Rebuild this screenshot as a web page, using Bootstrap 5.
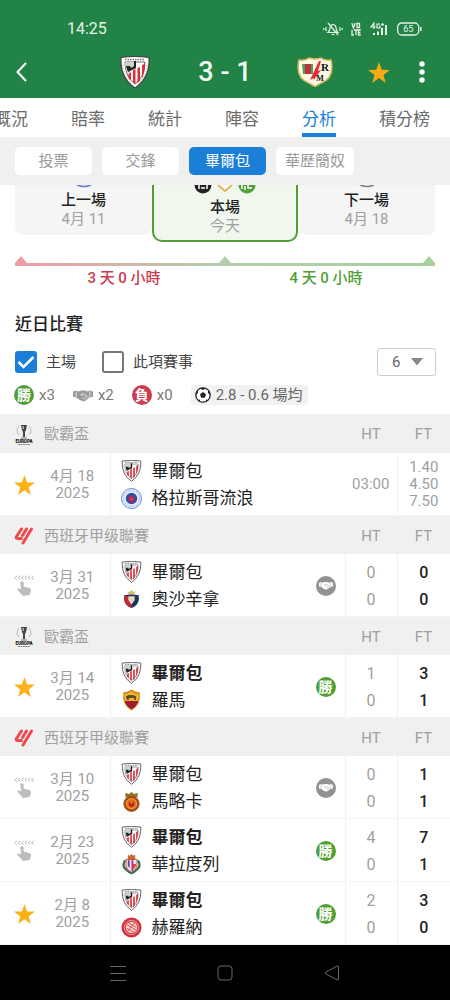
<!DOCTYPE html>
<html lang="zh-Hant">
<head>
<meta charset="utf-8">
<meta name="viewport" content="width=device-width, initial-scale=1">
<title>畢爾包 3 - 1 華歷簡奴</title>
<link rel="stylesheet" href="https://cdn.jsdelivr.net/npm/bootstrap@5.3.0/dist/css/bootstrap.min.css">
<style>
  :root { --green: #228346; --win: #4f9f36; --lose: #cb3c4f; --blue: #1b7fd8; --soft: #f0f0f0; --dim: #a0a0a0; }
  body { font-family: Roboto, "Noto Sans CJK TC", sans-serif; font-size: 15px; line-height: 20px; color: #222; background: #fff; }
  svg { display: block; flex: none; }
  .app-head { background: var(--green); color: #fff; }
  .status-row { height: 46px; padding: 12px 28px 0 67px; font-size: 16px; color: #e6f3e9; }
  .title-row { display: grid; grid-template-columns: 90px 1fr 1fr 1fr 90px; height: 52px; align-items: center; justify-items: center; }
  .bare { background: none; border: 0; padding: 0; color: inherit; }
  .score-line { font-size: 27px; line-height: 32px; font-weight: 500; color: #f3faf4; margin: 0; }
  .tab-strip { gap: 43px; height: 39px; margin-left: -6px; overflow: hidden; }
  .tab-strip a { color: #6b6b6b; font-size: 17px; line-height: 24px; padding: 9px 0 2px; border-bottom: 4px solid transparent; text-decoration: none; white-space: nowrap; }
  .tab-strip a.active { color: var(--blue); border-color: var(--blue); }
  .pill-bar { background: var(--soft); padding: 10px 15px; gap: 10px; height: 48px; }
  .pill { border: 0; border-radius: 5px; background: #fff; color: #9a9a9a; min-width: 77px; height: 28px; line-height: 28px; padding: 0 9px; }
  .pill.active { background: var(--blue); color: #fff; }
  .trio { padding: 0 15px; height: 57px; overflow: hidden; text-align: center; }
  .side-card { flex: 1; height: 50px; background: #f5f5f5; padding-top: 5px; border-radius: 0 0 8px 8px; }
  .mid-card { width: 146px; background: #f0f8ee; border: solid var(--win); border-width: 0 2px 2px; border-radius: 0 0 10px 10px; }
  .mid-card .title-text { margin-top: 3px; }
  .title-text { font-weight: 500; color: #222; line-height: 20px; }
  .day-text { color: var(--dim); line-height: 19px; }
  .rail { margin: 14px 15px 0; }
  .rail-line { height: 3px; background: linear-gradient(90deg, #ef9aa6, #b3cfaa 50%, #a9d09a); }
  .rail-label { font-weight: 500; line-height: 20px; margin-top: 2px; }
  h2 { font-size: 17px; line-height: 24px; font-weight: 500; margin: 24px 15px 0; }
  .filters { padding: 11px 14px 0 15px; height: 41px; }
  .filters .form-check-input { width: 22px; height: 22px; margin: 0 9px 0 0; border: 2px solid #777; border-radius: 3px; }
  .filters .form-check-input:checked { background-color: var(--blue); border-color: var(--blue); background-image: url("data:image/svg+xml,%3Csvg xmlns='http://www.w3.org/2000/svg' viewBox='0 0 18 18'%3E%3Cpath d='M1.500 9l5 5L16.500 4' fill='none' stroke='%23fff' stroke-width='2.500'/%3E%3C/svg%3E"); }
  .filters label { margin-right: 26px; color: #444; }
  .count-select { width: 59px; height: 28px; padding: 0 0 0 14px; border: 1px solid #ccc; border-radius: 3px; color: #666; appearance: none; background: #fff url("data:image/svg+xml,%3Csvg xmlns='http://www.w3.org/2000/svg' width='12' height='8'%3E%3Cpath d='M0 0h12L6 7.500z' fill='%23888'/%3E%3C/svg%3E") no-repeat right 12px center; }
  .legend-row { padding: 8px 14px 9px; gap: 18px; color: #777; height: 37px; }
  .legend-row > span { gap: 5px; }
  .mark-dot { width: 20px; height: 20px; border-radius: 50%; color: #fff; background: var(--win); font-size: 14px; line-height: 20px; font-weight: 700; text-align: center; flex: none; }
  .mark-dot.lose { background: var(--lose); }
  .mark-dot.draw { background: #929292; display: flex; align-items: center; justify-content: center; }
  .avg-chip { background: #f2f2f2; padding: 0 5px 0 4px; border-radius: 3px; color: #666; }
  .games { table-layout: fixed; margin: 0; }
  .games > tbody > tr > * { padding: 2px 0 0; border: 0; vertical-align: middle; text-align: center; font-weight: 400; color: var(--dim); height: 63px; border-bottom: 1px solid #f5f5f5; line-height: 17px; }
  .games > tbody > tr.league > * { height: 38px; padding-top: 4px; background: var(--soft); border-color: var(--soft); }
  .league-name { gap: 10px; padding-left: 14px; height: 22px; }
  .league-name svg { width: 20px; }
  .games > tbody > tr.game > .when { padding-right: 13px; }
  .games > tbody > tr.game > .split { border-left: 1px solid #f0f0f0; }
  .games > tbody > tr.game > .pts { line-height: 27px; font-size: 16px; }
  .games > tbody > tr.game > .full { color: #222; font-weight: 500; }
  .games td > svg { margin: auto; }
  .clubs { padding-left: 10px; padding-right: 9px; }
  .club { height: 27px; gap: 10px; font-size: 17px; color: #222; }
  .club.won { font-weight: 700; }
  .sys-nav { background: #000; height: 55px; gap: 89px; color: #686868; }
</style>
</head>
<body>
<svg class="d-none" aria-hidden="true">
  <symbol id="athletic" viewBox="0 0 30 33">
    <path d="M1 1.500Q15-.5 29 1.500Q30 22 15 32Q0 22 1 1.500z" fill="#fff" stroke="#444" stroke-width="1.200"/>
    <path d="M5 6H25Q25 21 15 28Q5 21 5 6z" fill="#fff" stroke="#444" stroke-width=".8"/>
    <path d="M5 6H16V11L12 14L8 17.500Q5 12 5 6z" fill="#cdd3c4"/>
    <path d="M6 10h4l1 2 5-3v3l-8 4zM14 5h2v5h-2z" fill="#222"/>
    <path d="M8.500 18l2.500-2v8.500l-2.500-2.500zM13 14.500l2.500-2V28L13 26zM17.500 12l2.500-1v14l-2.500 2zM22 9.500L25 7q0 9-3 15.500z" fill="#d8303c"/>
    <path d="M5 3.500h20" stroke="#777" stroke-width="1.500" stroke-dasharray="1.500 1"/>
    <path d="M3 9q1 12 9 19M27 9q-1 12-9 19" fill="none" stroke="#999" stroke-dasharray="1 2"/>
  </symbol>
  <symbol id="rangers" viewBox="0 0 22 22">
    <circle cx="11" cy="11" r="10.500" fill="#eaf0fb" stroke="#5c83cf"/>
    <circle cx="11" cy="11" r="8.300" fill="none" stroke="#7f9edb" stroke-dasharray="1.200 1"/>
    <circle cx="11" cy="11" r="6" fill="#2450b0"/><path d="M8 7l3 2 3-2v7l-3 2-3-2z" fill="#a52b5c"/><path d="M9 10h4v3H9z" fill="#dd3146"/>
  </symbol>
  <symbol id="osasuna" viewBox="0 0 22 22">
    <path d="M6.500 2l2 1.500L11 1l2.500 2.500 2-1.500-1 4h-7z" fill="#d8bb72"/>
    <path d="M3 7q8-2 16 0v5q-1 6-8 9-7-3-8-9z" fill="#1b3665"/><path d="M3 7l8 2v12q-7-3-8-9z" fill="#c3283a"/>
    <path d="M7.500 8h7v4l-3.500 5-3.500-5z" fill="#e7d8bd"/>
  </symbol>
  <symbol id="roma" viewBox="0 0 22 24">
    <path d="M2.500 4Q7 4 11 1q4 3 8.500 3 2 13-8.500 19Q.5 17 2.500 4z" fill="#9e1b32" stroke="#d9a520"/>
    <path d="M3 5q4 0 8-3 4 3 8 3 .5 4-.5 8h-15Q2.500 9 3 5z" fill="#f0b323"/>
    <path d="M5 8q5-3 11 0v4h-2V9.500L8 10v2H6z" fill="#554a3d"/>
  </symbol>
  <symbol id="mallorca" viewBox="0 0 22 24">
    <path d="M4 2l4 1.500L11 1l3 2.500L18 2v5H4z" fill="#8b7a25"/><circle cx="11" cy="14.500" r="8.800" fill="#b53b1e" stroke="#8b6a1d"/>
    <circle cx="11" cy="14.500" r="6" fill="#e2731d" stroke="#eeb341"/><path d="M8 11.500v5l3 2 3-2v-5l-3 4z" fill="#b51e26"/>
  </symbol>
  <symbol id="valladolid" viewBox="0 0 22 24">
    <path d="M4 8q-4 6 1 10 3 3 6 4 3-1 6-4 5-4 1-10" fill="none" stroke="#426b59" stroke-width="2.500"/>
    <path d="M7 2l2 1 2-2 2 2 2-1v5H7z" fill="#ca6a27"/>
    <path d="M5 7h12v7q-1 5-6 7-5-2-6-7z" fill="#f4e6f0" stroke="#b8452d"/><path d="M7 8h2v9l-2-3zM11 8h2v11l-2 1z" fill="#7a3c91"/><path d="M12 12h4q0 4-4 6z" fill="#de403c"/>
  </symbol>
  <symbol id="girona" viewBox="0 0 22 22">
    <circle cx="11" cy="11" r="10.500" fill="#d32f3e"/><circle cx="11" cy="11" r="7.500" fill="none" stroke="#f3c0bb" stroke-width=".8"/><circle cx="11" cy="11" r="6" fill="#f6d1c7"/>
    <path d="M6 8l10 6M6 12l8 4M8 6l8 5M14 6l-7 9" stroke="#d9525a" stroke-width="1"/>
  </symbol>
  <symbol id="star" viewBox="0 0 22 21"><path d="M11 0l2.700 7.800 8.300.2-6.600 5 2.400 8L11 16.100 4.200 21l2.400-8L0 8l8.300-.2z" fill="currentColor"/></symbol>
  <symbol id="swipe" viewBox="0 0 22 22">
    <path d="M3 .8L1 2.800l2 2M6.500 .8L4.500 2.800l2 2M10 .8L8 2.800l2 2M13.500 .8L11.500 2.800l2 2M17 .8L15 2.800l2 2M20.500 .8L18.500 2.800l2 2" fill="none" stroke="#aaa"/>
    <path d="M6.500 7.500q1.800-2 3.600 0v4.500l6.500 1.800q1.600.6 1.200 2.500L16.500 21l-7 1-6-6.500 1-1.500 3 1z" fill="#bdbdbd"/>
  </symbol>
  <symbol id="europa" viewBox="0 0 18 22">
    <path d="M4 2q-4 5 0 9M14 2q4 5 0 9" fill="none" stroke="#bbb"/>
    <path d="M6 1h6l-1 5-1 2v5H8V8L7 6z" fill="#444"/><path d="M8.200 2v3" stroke="#ddd"/>
    <path d="M6 14h6" stroke="#777"/><text x="9" y="18.500" text-anchor="middle" font-size="4.500" font-weight="900" fill="#111">EUROPA</text>
    <path d="M3 20.500h12" stroke="#888" stroke-dasharray="2 .5"/>
  </symbol>
  <symbol id="laliga" viewBox="0 0 20 18">
    <path d="M7.500 2L2.500 9.500Q1.500 11.500 4 11.500H7.500M12.500 2L8.500 8.500M17.500 2L9 16" fill="none" stroke="#ee4b4e" stroke-width="3" stroke-linecap="round" stroke-linejoin="round"/>
  </symbol>
  <symbol id="shake" viewBox="0 0 22 13">
    <path d="M0 2l4-1 2 1 3-1h4l3 1 2-1 4 1v6l-3 .5-6 4q-1.500.8-2.500-.3-1.500.5-2.500-.7-1.300 0-2-1.200L3 8.500 0 8z" fill="currentColor"/>
    <path d="M11 3.500L8.500 6q1.500 1 4-1l5 4M12.500 8l2.500 2M10.500 9l2 2M3.500 2v6M18.500 2v6" fill="none" stroke="var(--cut,#fff)" stroke-width=".8"/>
  </symbol>
</svg>

<div class="d-flex flex-column min-vh-100">
<header class="app-head">
  <div class="status-row d-flex align-items-center justify-content-between">
    <span>14:25</span>
    <span class="d-flex align-items-center gap-2">
      <svg width="20" height="14" viewBox="0 0 20 14" fill="none" stroke="currentColor" stroke-width="1.200"><path d="M5 10.500h10q-2-1.500-2-5Q12.500 2.500 10 2.500T7 5.500q0 3.500-2 5zM8.500 12.500h3M5 1l10 12M3 5v4M17 5v4M.800 6v2M19.200 6v2"/></svg>
      <svg width="10" height="14" viewBox="0 0 10 14" fill="none" stroke="currentColor" stroke-width="1.300"><path d="M.8 1L2.500 6 4.200 1M6 1.500h2.500V5.500H6zM1 8v5h2M3 8h4M5 8v5M9.800 8H7.500v5h2.300M7.500 10.500h2"/></svg>
      <svg width="20" height="14" viewBox="0 0 20 14" fill="none" stroke="currentColor" stroke-width="1.200"><path d="M5 7V1L2 5h4.500M11 2H8v4h3V4H9.800M12 2.500h3M13.500 1v3"/><path d="M5 13v-2M9 13V9.500M13 13V6M17 13V3" stroke-width="2"/></svg>
      <svg width="25" height="14" viewBox="0 0 25 14"><rect x=".7" y="1" width="21" height="12" rx="4" fill="none" stroke="currentColor" stroke-width="1.300"/><path d="M23.800 5v4" stroke="currentColor" stroke-width="1.500"/><text x="11.200" y="10.300" text-anchor="middle" font-size="9" fill="currentColor">65</text></svg>
    </span>
  </div>
  <div class="title-row">
    <button class="bare w-100 ps-3 text-start" aria-label="返回"><svg width="11" height="20" viewBox="0 0 11 20" fill="none" stroke="currentColor" stroke-width="2"><path d="M10 1L1.500 10 10 19"/></svg></button>
    <svg width="30" height="33"><use href="#athletic"/></svg>
    <h1 class="score-line">3 - 1</h1>
    <svg width="36" height="30" viewBox="0 0 36 30">
      <path d="M2 3Q9 4 12 1q6 2 12 0 3 3 10 2 4 18-10 23l-6 3.500-6-3.500Q-2 21 2 3z" fill="#fff8e6" stroke="#d9bd62" stroke-width="1.500"/>
      <path d="M5 7h11v10H6z" fill="#5a9b58"/><path d="M8 7h6v10H8z" fill="#b8343a"/>
      <path d="M22 4L13 23l4-2-1 3 8-11-3 1 3-10z" fill="#e32b3b"/>
      <text x="28" y="14" text-anchor="middle" font-family="Liberation Serif, serif" font-weight="700" font-size="11" fill="#111">R</text>
      <text x="23" y="24" text-anchor="middle" font-family="Liberation Serif, serif" font-weight="700" font-size="8" fill="#111">M</text>
    </svg>
    <div class="d-flex w-100">
      <button class="bare ps-2" aria-label="收藏" style="color:#f9ab11"><svg width="22" height="21"><use href="#star"/></svg></button>
      <button class="bare ms-4 ps-1" aria-label="更多"><svg width="8" height="22" viewBox="0 0 8 22" fill="currentColor"><circle cx="4" cy="3" r="2.700"/><circle cx="4" cy="11" r="2.700"/><circle cx="4" cy="19" r="2.700"/></svg></button>
    </div>
  </div>
</header>

<nav class="tab-strip d-flex">
  <a href="#">概況</a><a href="#">賠率</a><a href="#">統計</a><a href="#">陣容</a><a href="#" class="active">分析</a><a href="#">積分榜</a>
</nav>
<div class="pill-bar d-flex">
  <button class="pill">投票</button><button class="pill">交鋒</button><button class="pill active">畢爾包</button><button class="pill">華歷簡奴</button>
</div>

<main class="flex-grow-1">
  <section class="trio d-flex">
    <div class="side-card position-relative">
      <svg class="position-absolute top-0 start-50 translate-middle-x" width="16" height="3" viewBox="0 0 16 3"><path d="M1 0q7 3 14 0" fill="none" stroke="#6878c8" stroke-width="1.500"/></svg>
      <div class="title-text">上一場</div><div class="day-text">4月 11</div>
    </div>
    <div class="mid-card">
      <svg class="mx-auto" width="62" height="9" viewBox="0 0 62 9"><circle cx="9" cy="0" r="8.500" fill="#222"/><path d="M5 4V0M13 4V0M7 3h4" stroke="#fff" stroke-width="1.500"/><path d="M24 0l7 6 7-6" fill="#fff" stroke="#dfb354" stroke-width="2"/><circle cx="53" cy="0" r="8.500" fill="#4f9f36"/><path d="M48 0v4M51 1v4M54 0v3h4" stroke="#fff" stroke-width="1.500" fill="none"/></svg>
      <div class="title-text">本場</div><div class="day-text">今天</div>
    </div>
    <div class="side-card position-relative">
      <svg class="position-absolute top-0 start-50 translate-middle-x" width="16" height="3" viewBox="0 0 16 3"><path d="M1 0q7 3 14 0" fill="none" stroke="#7c8090" stroke-width="1.500"/></svg>
      <div class="title-text">下一場</div><div class="day-text">4月 18</div>
    </div>
  </section>

  <section class="rail">
    <div class="d-flex justify-content-between">
      <svg width="12" height="7" viewBox="0 0 12 7"><path d="M6 0l6 7H0z" fill="#ef9aa6"/></svg>
      <svg width="12" height="7" viewBox="0 0 12 7"><path d="M6 0l6 7H0z" fill="#b3cfaa"/></svg>
      <svg width="12" height="7" viewBox="0 0 12 7"><path d="M6 0l6 7H0z" fill="#a9d09a"/></svg>
    </div>
    <div class="rail-line"></div>
    <div class="rail-label d-flex text-center px-2">
      <span class="w-50" style="color:var(--lose)">3 天 0 小時</span>
      <span class="w-50" style="color:var(--win)">4 天 0 小時</span>
    </div>
  </section>

  <h2>近日比賽</h2>
  <form class="filters d-flex align-items-center">
    <input class="form-check-input" type="checkbox" id="home" checked><label for="home">主場</label>
    <input class="form-check-input" type="checkbox" id="same"><label for="same">此項賽事</label>
    <select class="count-select ms-auto" aria-label="場數"><option>6</option><option>10</option></select>
  </form>
  <div class="legend-row d-flex">
    <span class="d-flex"><span class="mark-dot">勝</span>x3</span>
    <span class="d-flex align-items-center"><svg width="20" height="13" style="color:#999"><use href="#shake"/></svg>x2</span>
    <span class="d-flex"><span class="mark-dot lose">負</span>x0</span>
    <span class="avg-chip d-flex align-items-center"><svg width="16" height="16" viewBox="0 0 16 16"><circle cx="8" cy="8" r="7.200" fill="#fff" stroke="#222" stroke-width="1.300"/><path d="M8 5l3 2.200-1.100 3.600H6.100L5 7.200zM5 1.500L8 3l3-1.500L8 .8zM1 8l2-2-.5-3L1 6zM15 8l-2-2 .5-3L15 6zM3 13l2-.5L5 15zM13 13l-2-.5V15z" fill="#222"/></svg>2.8 - 0.6 場均</span>
  </div>

  <table class="table games">
    <colgroup><col style="width:48px"><col style="width:62px"><col><col style="width:52px"><col style="width:53px"></colgroup>
    <tbody>
      <tr class="league"><th colspan="3"><div class="league-name d-flex align-items-center"><svg height="22"><use href="#europa"/></svg>歐霸盃</div></th><th>HT</th><th>FT</th></tr>
      <tr class="game"><td style="color:#fbb117"><svg width="21" height="20"><use href="#star"/></svg></td><td class="when">4月 18<br>2025</td>
        <td class="split"><div class="clubs"><div class="club d-flex align-items-center"><svg width="21" height="22"><use href="#athletic"/></svg>畢爾包</div><div class="club d-flex align-items-center"><svg width="21" height="21"><use href="#rangers"/></svg>格拉斯哥流浪</div></div></td>
        <td>03:00</td><td class="split">1.40<br>4.50<br>7.50</td></tr>

      <tr class="league"><th colspan="3"><div class="league-name d-flex align-items-center"><svg height="18"><use href="#laliga"/></svg>西班牙甲级聯賽</div></th><th>HT</th><th>FT</th></tr>
      <tr class="game"><td><svg width="21" height="21"><use href="#swipe"/></svg></td><td class="when">3月 31<br>2025</td>
        <td class="split"><div class="clubs d-flex align-items-center justify-content-between"><div><div class="club d-flex align-items-center"><svg width="21" height="22"><use href="#athletic"/></svg>畢爾包</div><div class="club d-flex align-items-center"><svg width="21" height="20"><use href="#osasuna"/></svg>奧沙辛拿</div></div><span class="mark-dot draw" style="--cut:#929292"><svg width="14" height="9"><use href="#shake"/></svg></span></div></td>
        <td class="split pts">0<br>0</td><td class="split pts full">0<br>0</td></tr>

      <tr class="league"><th colspan="3"><div class="league-name d-flex align-items-center"><svg height="22"><use href="#europa"/></svg>歐霸盃</div></th><th>HT</th><th>FT</th></tr>
      <tr class="game"><td style="color:#fbb117"><svg width="21" height="20"><use href="#star"/></svg></td><td class="when">3月 14<br>2025</td>
        <td class="split"><div class="clubs d-flex align-items-center justify-content-between"><div><div class="club won d-flex align-items-center"><svg width="21" height="22"><use href="#athletic"/></svg>畢爾包</div><div class="club d-flex align-items-center"><svg width="21" height="22"><use href="#roma"/></svg>羅馬</div></div><span class="mark-dot">勝</span></div></td>
        <td class="split pts">1<br>0</td><td class="split pts full">3<br>1</td></tr>

      <tr class="league"><th colspan="3"><div class="league-name d-flex align-items-center"><svg height="18"><use href="#laliga"/></svg>西班牙甲级聯賽</div></th><th>HT</th><th>FT</th></tr>
      <tr class="game"><td><svg width="21" height="21"><use href="#swipe"/></svg></td><td class="when">3月 10<br>2025</td>
        <td class="split"><div class="clubs d-flex align-items-center justify-content-between"><div><div class="club d-flex align-items-center"><svg width="21" height="22"><use href="#athletic"/></svg>畢爾包</div><div class="club d-flex align-items-center"><svg width="21" height="21"><use href="#mallorca"/></svg>馬略卡</div></div><span class="mark-dot draw" style="--cut:#929292"><svg width="14" height="9"><use href="#shake"/></svg></span></div></td>
        <td class="split pts">0<br>0</td><td class="split pts full">1<br>1</td></tr>
      <tr class="game"><td><svg width="21" height="21"><use href="#swipe"/></svg></td><td class="when">2月 23<br>2025</td>
        <td class="split"><div class="clubs d-flex align-items-center justify-content-between"><div><div class="club won d-flex align-items-center"><svg width="21" height="22"><use href="#athletic"/></svg>畢爾包</div><div class="club d-flex align-items-center"><svg width="21" height="22"><use href="#valladolid"/></svg>華拉度列</div></div><span class="mark-dot">勝</span></div></td>
        <td class="split pts">4<br>0</td><td class="split pts full">7<br>1</td></tr>
      <tr class="game"><td style="color:#fbb117"><svg width="21" height="20"><use href="#star"/></svg></td><td class="when">2月 8<br>2025</td>
        <td class="split"><div class="clubs d-flex align-items-center justify-content-between"><div><div class="club won d-flex align-items-center"><svg width="21" height="22"><use href="#athletic"/></svg>畢爾包</div><div class="club d-flex align-items-center"><svg width="21" height="21"><use href="#girona"/></svg>赫羅納</div></div><span class="mark-dot">勝</span></div></td>
        <td class="split pts">2<br>0</td><td class="split pts full">3<br>0</td></tr>
    </tbody>
  </table>
</main>

<footer class="sys-nav d-flex align-items-center justify-content-center">
  <button class="bare" aria-label="最近"><svg width="18" height="18" viewBox="0 0 18 18" fill="none" stroke="currentColor"><path d="M1 2.500h16M1 9.500h16M1 16.500h16"/></svg></button>
  <button class="bare" aria-label="主頁"><svg width="18" height="18" viewBox="0 0 18 18" fill="none" stroke="currentColor"><rect x="2" y="2" width="14" height="14" rx="3"/></svg></button>
  <button class="bare" aria-label="上一頁"><svg width="18" height="18" viewBox="0 0 18 18" fill="none" stroke="currentColor"><path d="M15.500 3v12q0 1.500-1.500.8L3 10q-1-1 0-2l11-6q1.500-.5 1.500 1z"/></svg></button>
</footer>
</div>
<script src="https://cdn.jsdelivr.net/npm/bootstrap@5.3.0/dist/js/bootstrap.bundle.min.js"></script>
</body>
</html>
